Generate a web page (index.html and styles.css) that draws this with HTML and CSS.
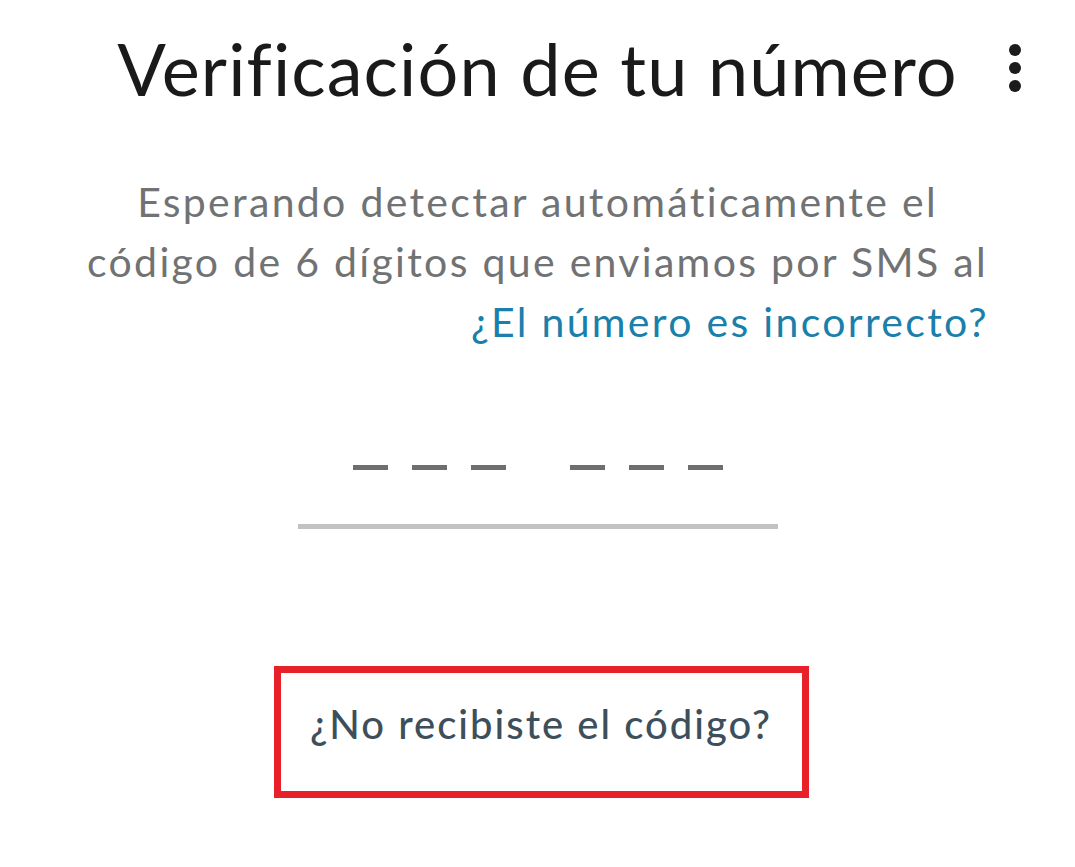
FILE: index.html
```html
<!DOCTYPE html>
<html lang="es">
<head>
  <meta charset="UTF-8" />
  <title>Verificación de tu número</title>
  <link rel="stylesheet" href="styles.css">
</head>
<body>
  <header class="topbar">
    <span></span>
    <h1>Verificación de tu número</h1>
    <button class="menu" aria-label="Más opciones">
      <svg width="14" height="50" viewBox="0 0 14 50">
        <circle cx="7" cy="7" r="6" fill="#1b1b1b"/>
        <circle cx="7" cy="25" r="6" fill="#1b1b1b"/>
        <circle cx="7" cy="43" r="6" fill="#1b1b1b"/>
      </svg>
    </button>
  </header>

  <p class="intro">
    Esperando detectar automáticamente el<br>
    código de 6 dígitos que enviamos por SMS al
    <a class="wrong" href="#">¿El número es incorrecto?</a>
  </p>

  <div class="code">
    <div class="slots">
      <div class="group"><i></i><i></i><i></i></div>
      <div class="group"><i></i><i></i><i></i></div>
    </div>
    <div class="underline"></div>
  </div>

  <div class="resend">
    <a href="#">¿No recibiste el código?</a>
  </div>
</body>
</html>
```

FILE: styles.css
```css
body {
  margin: 0;
  background: #fff;
  font-family: Lato, "Noto Sans", sans-serif;
}
.topbar {
  display: grid;
  grid-template-columns: 1fr auto 1fr;
  align-items: center;
  padding-top: 25px;
}
.topbar h1 {
  margin: 0;
  font-size: 72px;
  font-weight: 400;
  line-height: 1.2;
  letter-spacing: 1.1px;
  color: #1a1a1a;
}
.menu {
  justify-self: start;
  margin-left: 50px;
  border: 0;
  background: none;
  padding: 0;
  display: flex;
}
.intro {
  margin: 61px 0 0;
  font-size: 41px;
  line-height: 60px;
  letter-spacing: 2.3px;
  color: #707274;
  text-align: center;
}
.wrong {
  display: block;
  text-align: right;
  padding-right: 86px;
  color: #1a7fab;
  text-decoration: none;
}
.code {
  width: 480px;
  margin: 0 auto;
  padding-top: 113px;
}
.slots {
  display: flex;
  justify-content: center;
  gap: 64px;
}
.group {
  display: flex;
  gap: 24px;
}
.group i {
  width: 35px;
  height: 5px;
  background: #6e6e6e;
}
.underline {
  margin-top: 54px;
  height: 5px;
  background: #c2c2c2;
}
.resend {
  box-sizing: border-box;
  width: 535px;
  height: 132px;
  margin-top: 137px;
  margin-left: calc(50% - 264px);
  padding-bottom: 16px;
  border: 7px solid #e8202a;
  display: flex;
  align-items: center;
  justify-content: center;
}
.resend a {
  font-size: 40px;
  font-weight: 500;
  letter-spacing: 2px;
  color: #3d4f5b;
  text-decoration: none;
}
```
